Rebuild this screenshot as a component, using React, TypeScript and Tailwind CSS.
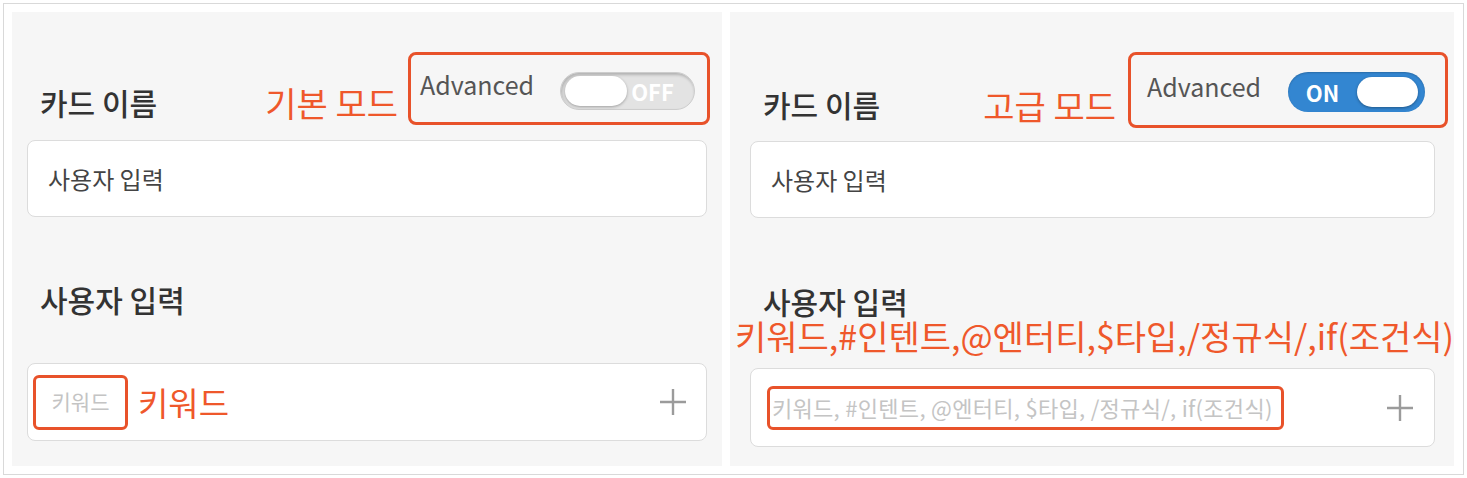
const kr = { fontFamily: '"Noto Sans CJK KR", "Noto Sans", sans-serif' };

function Toggle({ on }: { on: boolean }) {
  if (on) {
    return (
      <div className="flex items-center w-[137px] h-[40px] rounded-full bg-[#3386d1] mt-[4px] shadow-[inset_0_1px_2px_rgba(0,0,0,0.2)]">
        <span className="flex-1 text-center text-white text-[22px] font-bold leading-none">ON</span>
        <div className="w-[61px] h-[30px] rounded-full bg-white mr-[7px] shadow-[0_1px_3px_rgba(0,0,0,0.35)]" />
      </div>
    );
  }
  return (
    <div className="flex items-center w-[135px] h-[38px] rounded-full bg-[#e3e3e3] border border-[#cdcdcd] pl-[4px] mt-[5px] shadow-[inset_1px_2px_3px_rgba(0,0,0,0.22)]">
      <div className="w-[62px] h-[30px] rounded-full bg-white shadow-[0_1px_3px_rgba(0,0,0,0.3)]" />
      <span className="flex-1 text-center text-white text-[22px] font-bold leading-none pr-[16px]">OFF</span>
    </div>
  );
}

function PlusIcon() {
  return (
    <svg width="26" height="26" viewBox="0 0 26 26" className="shrink-0">
      <path d="M13 0v26M0 13h26" stroke="#9b9b9b" strokeWidth="2.4" />
    </svg>
  );
}

function Heading({ children, className }: { children: string; className: string }) {
  return (
    <div className={"text-[30px] leading-[38px] font-medium text-[#333] pl-[13px] " + className}>{children}</div>
  );
}

export default function App() {
  return (
    <div className="w-[1467px] h-[478px] bg-white p-[3px]" style={kr}>
      <div className="h-full flex gap-[8px] p-[8px] border border-[#d9d9d9]">
        {/* 기본 모드 */}
        <div className="w-[710px] bg-[#f6f6f6] px-[15px] pt-[40px] flex flex-col">
          <div className="flex justify-between items-start -mr-[3px]">
            <Heading className="mt-[31px]">카드 이름</Heading>
            <div className="flex items-start gap-[10px]">
              <span className="mt-[31px] text-[34px] leading-[40px] text-[#ef582b]">기본 모드</span>
              <div className="flex items-center justify-between w-[302px] h-[73px] border-[3px] border-[#e8522a] rounded-[8px] pl-[9px] pr-[12px]">
                <span className="text-[25px] leading-[36px] text-[#555] mb-[9px]">Advanced</span>
                <Toggle on={false} />
              </div>
            </div>
          </div>
          <div className="mt-[15px] h-[77px] rounded-[8px] border border-[#dcdcdc] bg-white flex items-center pl-[20px]">
            <span className="text-[24px] text-[#444]">사용자 입력</span>
          </div>
          <Heading className="mt-[63px]">사용자 입력</Heading>
          <div className="mt-[45px] h-[78px] rounded-[8px] border border-[#dcdcdc] bg-white flex items-center pl-[5px] pr-[20px]">
            <div className="w-[95px] h-[55px] border-[3px] border-[#e8522a] rounded-[6px] flex items-center justify-center">
              <span className="text-[21px] text-[#c4c4c4]">키워드</span>
            </div>
            <span className="ml-[10px] text-[33px] leading-[40px] text-[#ef582b]">키워드</span>
            <div className="flex-1" />
            <PlusIcon />
          </div>
        </div>

        {/* 고급 모드 */}
        <div className="w-[724px] bg-[#f6f6f6] pl-[20px] pr-[19px] pt-[40px] flex flex-col">
          <div className="flex justify-between items-start -mr-[13px]">
            <Heading className="mt-[33px]">카드 이름</Heading>
            <div className="flex items-start gap-[12px]">
              <span className="mt-[34px] text-[34px] leading-[40px] text-[#ef582b]">고급 모드</span>
              <div className="flex items-center justify-between w-[320px] h-[76px] border-[3px] border-[#e8522a] rounded-[8px] pl-[16px] pr-[20px]">
                <span className="text-[25px] leading-[36px] text-[#555] mb-[9px]">Advanced</span>
                <Toggle on={true} />
              </div>
            </div>
          </div>
          <div className="mt-[13px] h-[77px] rounded-[8px] border border-[#dcdcdc] bg-white flex items-center pl-[20px]">
            <span className="text-[24px] text-[#444]">사용자 입력</span>
          </div>
          <Heading className="mt-[64px]">사용자 입력</Heading>
          <div className="-ml-[15px] text-[34px] leading-[32px] text-[#ef582b] whitespace-nowrap">
            키워드,#인텐트,@엔터티,$타입,/정규식/,if(조건식)
          </div>
          <div className="mt-[16px] h-[79px] rounded-[8px] border border-[#dcdcdc] bg-white flex items-center pl-[16px] pr-[21px]">
            <div className="h-[44px] border-[3px] border-[#e8522a] rounded-[6px] flex items-center pl-[2px] pr-[8px]">
              <span className="text-[22px] tracking-[0.3px] text-[#c4c4c4] whitespace-nowrap">키워드, #인텐트, @엔터티, $타입, /정규식/, if(조건식)</span>
            </div>
            <div className="flex-1" />
            <PlusIcon />
          </div>
        </div>
      </div>
    </div>
  );
}
